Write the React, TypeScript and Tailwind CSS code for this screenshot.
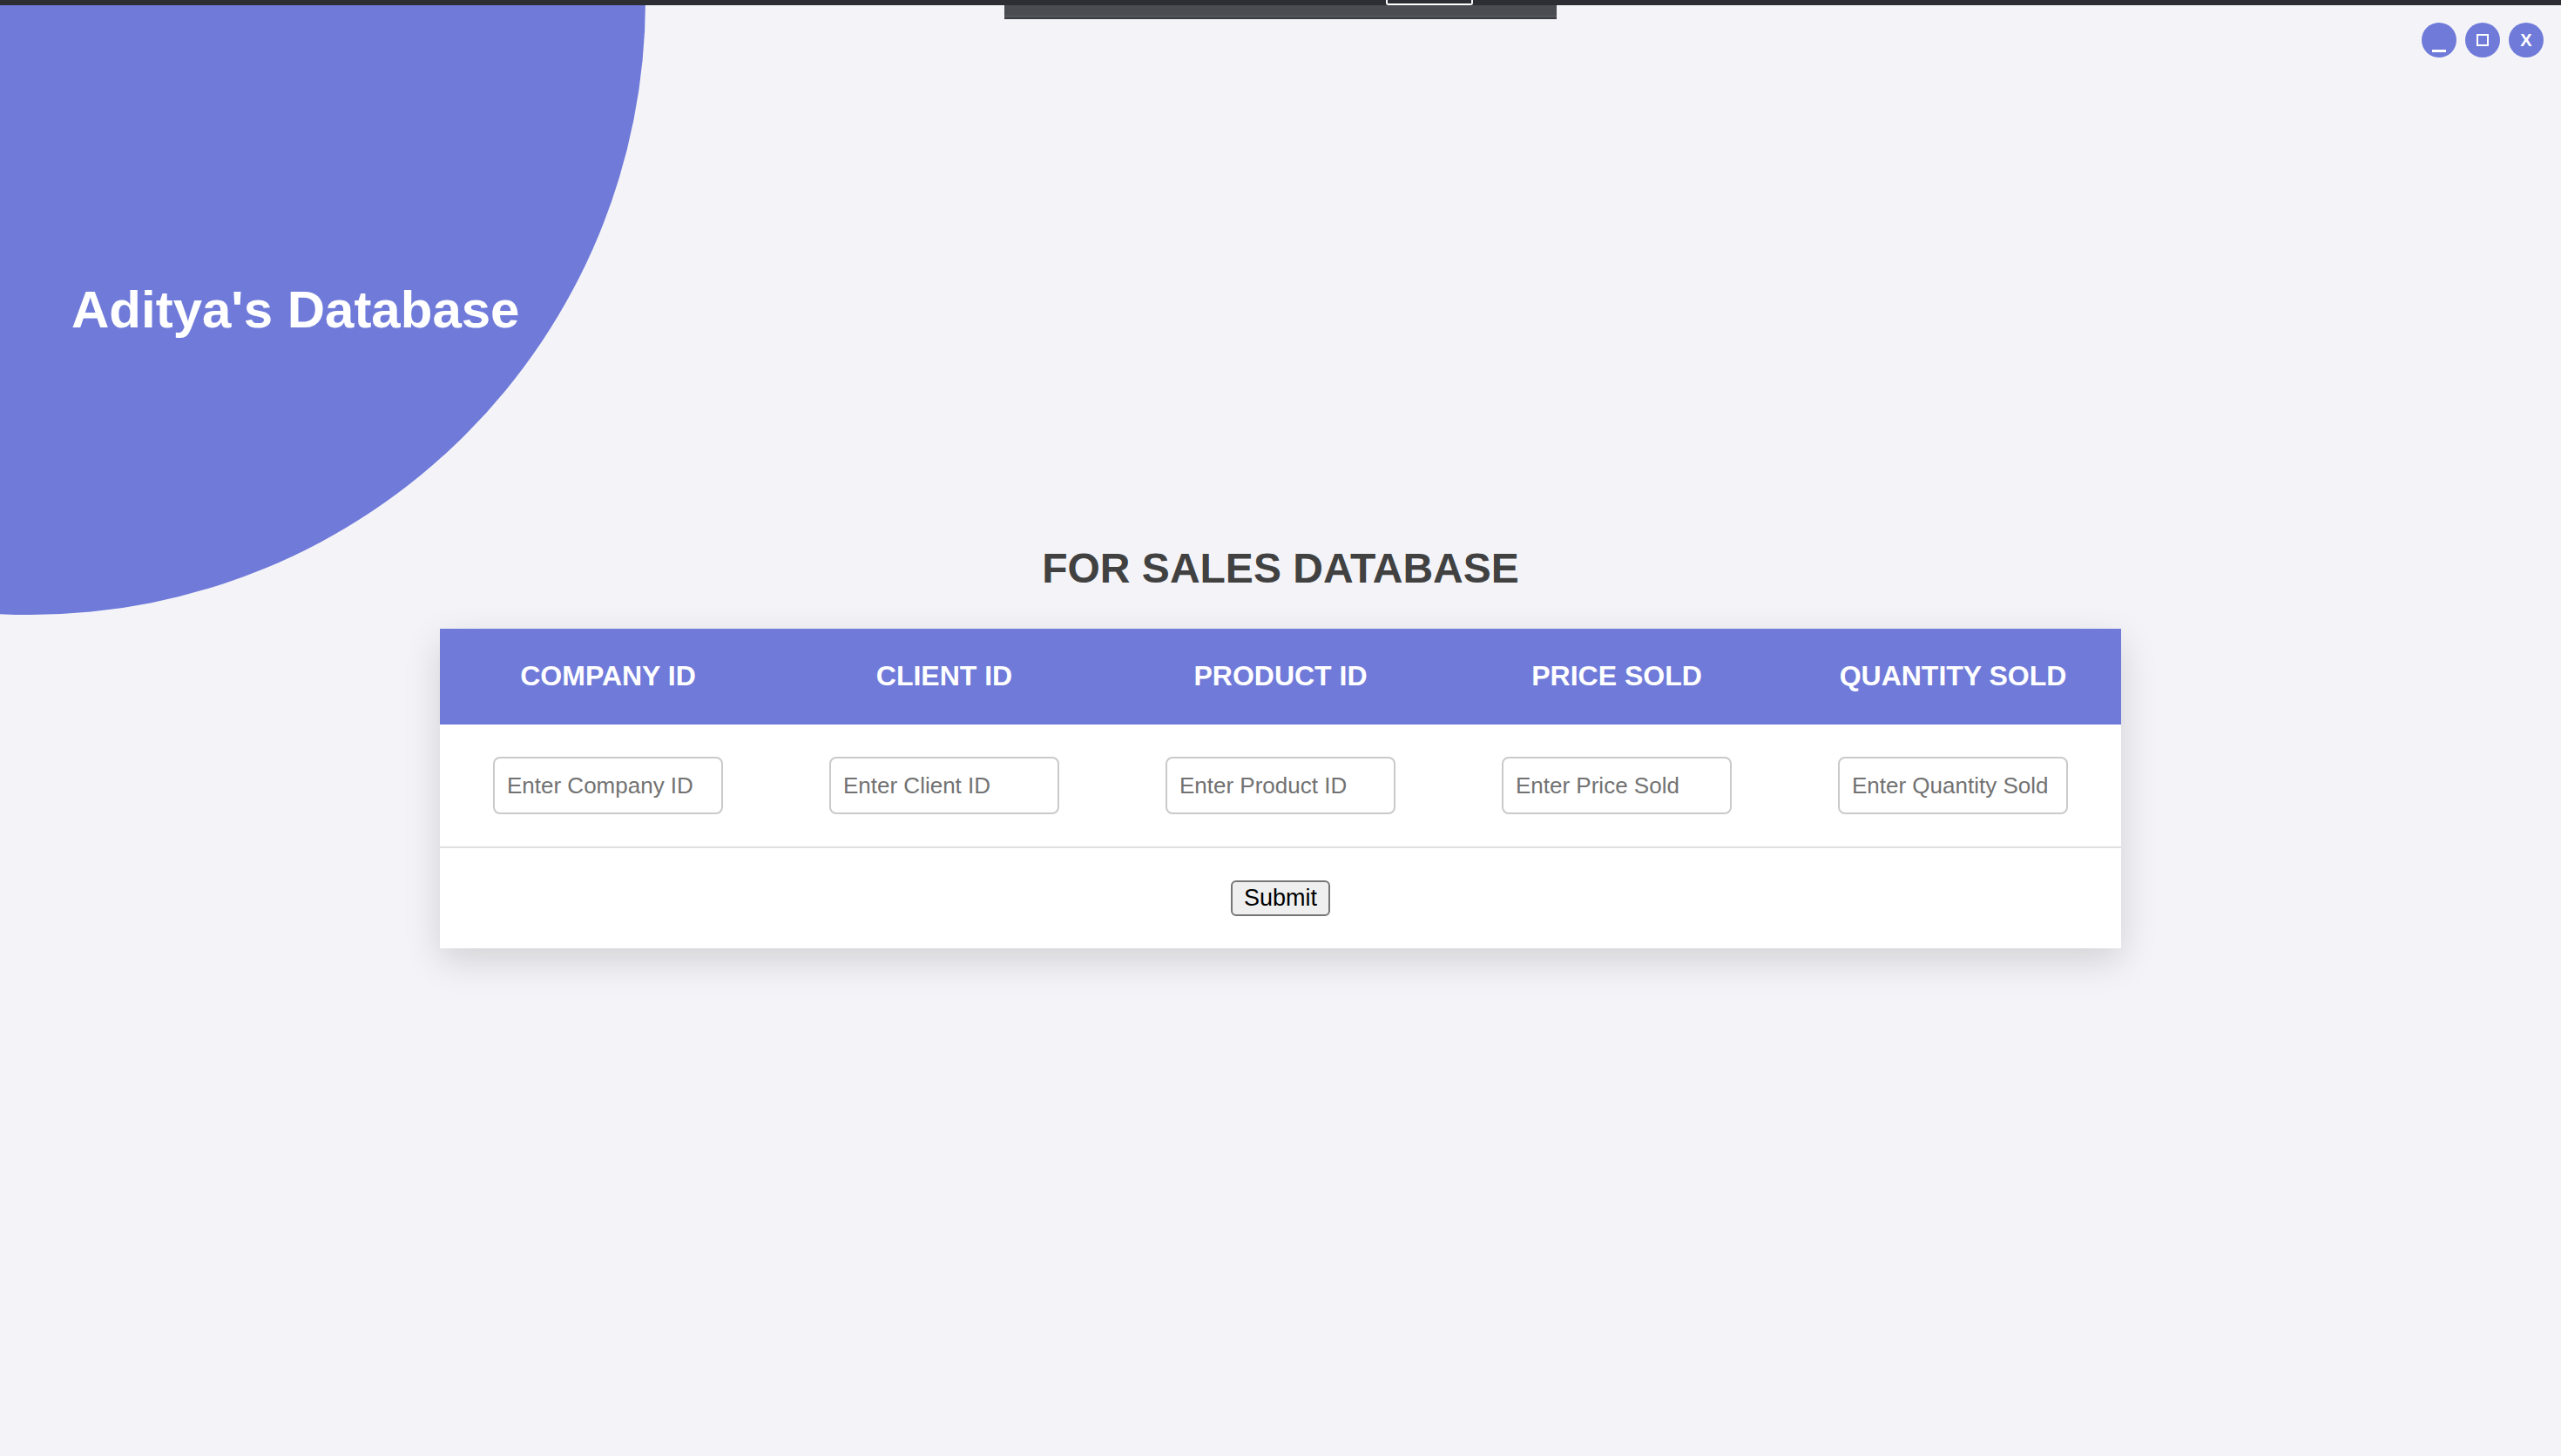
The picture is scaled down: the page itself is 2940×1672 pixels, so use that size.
import React from "react";

const cols = [
  { label: "COMPANY ID", ph: "Enter Company ID" },
  { label: "CLIENT ID", ph: "Enter Client ID" },
  { label: "PRODUCT ID", ph: "Enter Product ID" },
  { label: "PRICE SOLD", ph: "Enter Price Sold" },
  { label: "QUANTITY SOLD", ph: "Enter Quantity Sold" },
];

export default function App() {
  return (
    <div className="relative min-h-[1672px] w-full overflow-hidden bg-[#f4f4f8] font-['Liberation_Sans',Arial,sans-serif]">
      {/* decorative quarter circle */}
      <div className="absolute left-[-671px] top-[-706px] h-[1412px] w-[1412px] rounded-full bg-[#6f7ad9]" />

      {/* top recording bar overlay */}
      <div className="absolute inset-x-0 top-0 z-20 h-[6px] bg-[#2c2e33]" />
      <div className="absolute left-1/2 top-0 z-20 flex h-[22px] w-[634px] -translate-x-1/2 flex-col">
        <div className="h-[6px] bg-[#2c2e33]" />
        <div className="flex-1 bg-[#4b4c51]" />
        <div className="h-[1px] bg-[#5d5e63]" />
        <div className="h-[2px] bg-[#47484d]" />
        <div className="h-[1px] bg-[#36373c]" />
      </div>
      <div className="absolute left-[1591px] top-0 z-30 h-[6px] w-[100px] rounded-b-[3px] border-2 border-t-0 border-white" />

      {/* window buttons */}
      <div className="absolute right-[20px] top-[26px] z-10 flex gap-[10px]">
        <button className="flex h-[40px] w-[40px] items-end justify-center rounded-full bg-[#6f7ad9] pb-[6px]">
          <span className="block h-[3px] w-[16px] bg-white" />
        </button>
        <button className="flex h-[40px] w-[40px] items-center justify-center rounded-full bg-[#6f7ad9]">
          <span className="block h-[14px] w-[14px] border-2 border-white" />
        </button>
        <button className="flex h-[40px] w-[40px] items-center justify-center rounded-full bg-[#6f7ad9] text-[20px] font-bold leading-none text-white">
          X
        </button>
      </div>

      <div className="relative z-10 flex flex-col">
        <div className="pl-[82px] pt-[326px]">
          <h1 className="text-[60px] font-bold leading-none text-white">Aditya's Database</h1>
        </div>

        <h2 className="mt-[243px] text-center text-[48px] font-bold leading-none text-[#414141]">
          FOR SALES DATABASE
        </h2>

        <div className="mx-auto mt-[45px] w-[1930px] bg-white shadow-[0_14px_40px_rgba(0,0,0,0.14)]">
          <div className="grid h-[110px] grid-cols-5 bg-[#6f7ad9]">
            {cols.map((c) => (
              <div key={c.label} className="flex items-center justify-center pb-[2px] text-[32px] font-bold text-white">
                {c.label}
              </div>
            ))}
          </div>
          <div className="grid h-[142px] grid-cols-5 border-b-2 border-[#e0e0e0]">
            {cols.map((c) => (
              <div key={c.ph} className="flex items-center justify-center">
                <input
                  type="text"
                  placeholder={c.ph}
                  className="h-[66px] w-[264px] rounded-[8px] border-2 border-[#cacaca] bg-white px-[14px] text-[26px] text-[#333] outline-none placeholder:text-[#727272]"
                />
              </div>
            ))}
          </div>
          <div className="flex h-[115px] items-center justify-center">
            <button className="h-[41px] w-[114px] rounded-[6px] border-2 border-[#767676] bg-[#efefef] text-[27px] leading-none text-black">
              Submit
            </button>
          </div>
        </div>
      </div>
    </div>
  );
}
